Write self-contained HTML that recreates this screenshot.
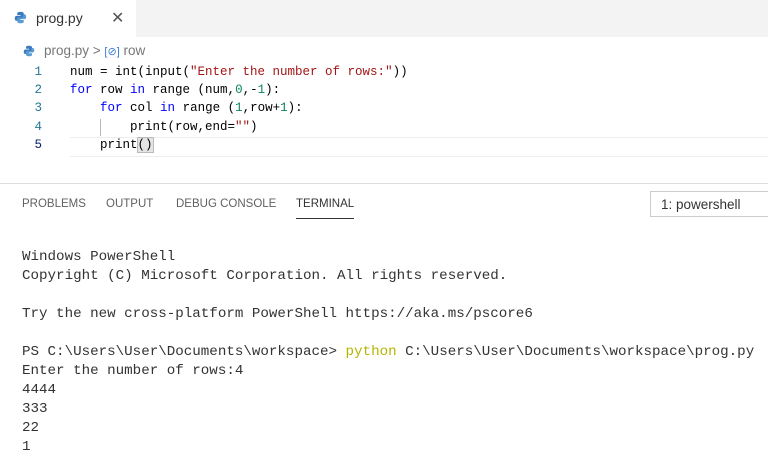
<!DOCTYPE html>
<html><head><style>
body{margin:0;width:768px;height:456px;background:#fff;overflow:hidden;position:relative;font-family:"Liberation Sans",sans-serif}
.tabbar{position:absolute;left:0;top:0;width:768px;height:37px;background:#f3f3f3}
.tab{position:absolute;left:0;top:0;width:136px;height:37px;background:#fff;}
.tab span{position:absolute;left:36px;top:10px;font-size:14px;color:#333}
.x{position:absolute;left:111px;top:8px;font-size:16px;color:#555}
.crumb{position:absolute;left:44px;top:43px;font-size:13.5px;color:#777}
.mono{font-family:"Liberation Mono",monospace;white-space:pre}
.code{position:absolute;left:70px;font-size:12.5px;color:#000}
.ln{position:absolute;left:30px;width:12px;font-size:12.5px;color:#237893;text-align:right}
.k{color:#0000ff}.s{color:#a31515}.n{color:#098658}
.cur{position:absolute;left:70px;top:137px;width:698px;height:18px;border:1px solid #eee;border-left:none;border-right:none}
.sep{position:absolute;left:0;top:183px;width:768px;height:1px;background:#ddd}
.ptab{position:absolute;top:198px;font-size:11.5px;color:#616161}
.term{position:absolute;left:22px;font-size:14.2px;color:#333;line-height:19px}
.py{color:#b5b500}
</style></head><body>
<div class="tabbar"><div class="tab">
<svg style="position:absolute;left:14px;top:11px" width="13" height="13" viewBox="0 0 16 16"><path d="M8 1C4 1 4 2.5 4 3v2h4v1H3C1.5 6 1 7.5 1 9s.6 3 2 3h1.5v-2c0-1 1-2 2-2h4c1 0 1.5-.6 1.5-1.5V3c0-1-1-2-4-2z" fill="#3b7bbf"/><path d="M8 15c4 0 4-1.5 4-2v-2H8v-1h5c1.5 0 2-1.5 2-3s-.6-3-2-3h-1.5v2c0 1-1 2-2 2h-4C4.5 8 4 8.6 4 9.5V13c0 1 1 2 4 2z" fill="#5b9bd5"/></svg>
<span>prog.py</span><div class="x">✕</div></div></div>
<svg style="position:absolute;left:23px;top:45px" width="12" height="12" viewBox="0 0 16 16"><path d="M8 1C4 1 4 2.5 4 3v2h4v1H3C1.5 6 1 7.5 1 9s.6 3 2 3h1.5v-2c0-1 1-2 2-2h4c1 0 1.5-.6 1.5-1.5V3c0-1-1-2-4-2z" fill="#3b7bbf"/><path d="M8 15c4 0 4-1.5 4-2v-2H8v-1h5c1.5 0 2-1.5 2-3s-.6-3-2-3h-1.5v2c0 1-1 2-2 2h-4C4.5 8 4 8.6 4 9.5V13c0 1 1 2 4 2z" fill="#5b9bd5"/></svg>
<div class="crumb">prog.py &gt; <span style="color:#3a7bd5;font-size:11px">[⊘]</span> row</div>
<div class="cur"></div>
<div style="position:absolute;left:100px;top:119px;width:1px;height:17px;background:#bbb"></div>
<div class="ln mono" style="top:65px">1</div><div class="ln mono" style="top:83px">2</div><div class="ln mono" style="top:101px">3</div><div class="ln mono" style="top:120px">4</div><div class="ln mono" style="top:138px;color:#0b216f">5</div>
<div class="code mono" style="top:65px">num = int(input(<span class="s">"Enter the number of rows:"</span>))</div>
<div class="code mono" style="top:83px"><span class="k">for</span> row <span class="k">in</span> range (num,<span class="n">0</span>,-<span class="n">1</span>):</div>
<div class="code mono" style="top:101px">    <span class="k">for</span> col <span class="k">in</span> range (<span class="n">1</span>,row+<span class="n">1</span>):</div>
<div class="code mono" style="top:120px">        print(row,end=<span class="s">""</span>)</div>
<div class="code mono" style="top:138px">    print<span style="background:#e4e4e4;outline:1px solid #bbb">()</span></div>
<div class="sep"></div>
<div class="ptab" style="left:22px">PROBLEMS</div>
<div class="ptab" style="left:106px">OUTPUT</div>
<div class="ptab" style="left:176px">DEBUG CONSOLE</div>
<div class="ptab" style="left:296px;color:#333">TERMINAL</div>
<div style="position:absolute;left:296px;top:218px;width:58px;height:1px;background:#333"></div>
<div style="position:absolute;left:650px;top:191px;width:130px;height:26px;border:1px solid #ccc;box-sizing:border-box;font-size:13.5px;color:#333;padding:5px 0 0 10px">1: powershell</div>
<div class="term mono" style="top:248px">Windows PowerShell
Copyright (C) Microsoft Corporation. All rights reserved.

Try the new cross-platform PowerShell https://aka.ms/pscore6

PS C:\Users\User\Documents\workspace&gt; <span class="py">python</span> C:\Users\User\Documents\workspace\prog.py
Enter the number of rows:4
4444
333
22
1</div>
</body></html>
